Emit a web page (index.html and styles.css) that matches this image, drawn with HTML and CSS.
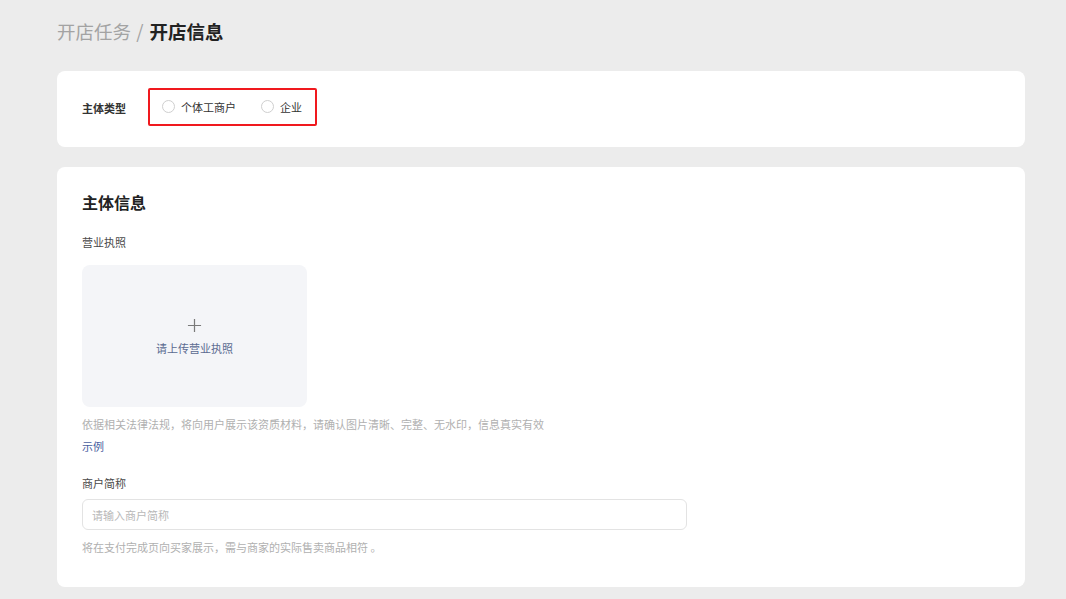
FILE: index.html
```html
<!DOCTYPE html>
<html lang="zh-CN">
<head>
    <meta charset="UTF-8">
    <title>开店信息</title>
    <link rel="stylesheet" href="styles.css">
</head>
<body>
    <main class="page">
        <div class="breadcrumb">
            <span class="crumb-parent">开店任务</span>
            <span class="crumb-sep">/</span>
            <span class="crumb-current">开店信息</span>
        </div>

        <section class="card card-type">
            <span class="field-label">主体类型</span>
            <div class="radio-group">
                <label class="radio"><span class="radio-dot"></span>个体工商户</label>
                <label class="radio"><span class="radio-dot"></span>企业</label>
            </div>
        </section>

        <section class="card card-info">
            <h2 class="card-title">主体信息</h2>
            <div class="label">营业执照</div>
            <div class="upload">
                <svg class="upload-plus" width="15" height="15" viewBox="0 0 16 16">
                    <path d="M8 1v14M1 8h14" stroke="#7a7a7a" stroke-width="1.3" fill="none"/>
                </svg>
                <span class="upload-text">请上传营业执照</span>
            </div>
            <p class="hint hint-upload">依据相关法律法规，将向用户展示该资质材料，请确认图片清晰、完整、无水印，信息真实有效</p>
            <span class="example-link">示例</span>
            <div class="label label-name">商户简称</div>
            <input class="text-input" type="text" placeholder="请输入商户简称">
            <p class="hint hint-name">将在支付完成页向买家展示，需与商家的实际售卖商品相符 。</p>
        </section>
    </main>
</body>
</html>
```

FILE: styles.css
```css
body{
    margin: 0;
    background-color: #ececec;
    font-family: "Noto Sans CJK SC", "Noto Sans", sans-serif;
    color: #333;
}
.page{
    padding: 0 41px 0 57px;
}
/* migas de pan */
.breadcrumb{
    height: 71px;
    padding-top: 18px;
    box-sizing: border-box;
    font-size: 18.5px;
    line-height: 26px;
}
.crumb-parent,
.crumb-sep{
    color: #a3a3a3;
}
.crumb-sep{
    margin: 0 2px 0 1px;
}
.crumb-current{
    color: #222;
    font-weight: 700;
}
.card{
    background-color: #fff;
    border-radius: 8px;
    box-sizing: border-box;
}
.card-type{
    height: 76px;
    padding: 0 0 5px 25px;
    display: flex;
    align-items: center;
}
.field-label{
    font-size: 11px;
    font-weight: 700;
    color: #333;
    margin-right: 22px;
    margin-top: 2px;
}
.radio-group{
    display: flex;
    align-items: center;
    flex-shrink: 0;
    height: 38px;
    width: 169px;
    box-sizing: border-box;
    border: 2px solid #f0191e;
    border-radius: 2px;
    padding-left: 12px;
}
.radio{
    display: flex;
    align-items: center;
    white-space: nowrap;
    font-size: 11px;
    color: #333;
    margin-right: 25px;
}
.radio-dot{
    flex-shrink: 0;
    width: 11px;
    height: 11px;
    border: 1px solid #cfcfcf;
    border-radius: 50%;
    margin-right: 6px;
}
.card-info{
    margin-top: 20px;
    height: 420px;
    padding: 23px 25px 0;
}
.card-title{
    margin: 0;
    font-size: 16px;
    line-height: 24px;
    font-weight: 700;
    color: #222;
}
.label{
    margin-top: 19px;
    font-size: 11px;
    line-height: 18px;
    color: #4a4a4a;
}
.upload{
    margin-top: 14px;
    width: 225px;
    height: 142px;
    background-color: #f4f5f8;
    border-radius: 8px;
    display: flex;
    flex-direction: column;
    align-items: center;
    justify-content: center;
}
.upload-plus{
    margin-top: 2px;
}
.upload-text{
    margin-top: 7px;
    font-size: 11px;
    color: #5b6b91;
}
.hint{
    margin: 0;
    font-size: 11px;
    line-height: 18px;
    color: #b0b0b0;
}
.hint-upload{
    margin-top: 8px;
}
.example-link{
    display: block;
    margin-top: 4px;
    font-size: 11px;
    line-height: 18px;
    color: #4a60a0;
}
.label-name{
    margin-top: 19px;
}
.text-input{
    display: block;
    margin-top: 7px;
    width: 605px;
    height: 31px;
    box-sizing: border-box;
    border: 1px solid #e3e3e3;
    border-radius: 6px;
    padding: 0 9px;
    font-family: inherit;
    font-size: 11px;
    outline: none;
}
.text-input::placeholder{
    color: #b8b8b8;
}
.hint-name{
    margin-top: 8px;
}
```
